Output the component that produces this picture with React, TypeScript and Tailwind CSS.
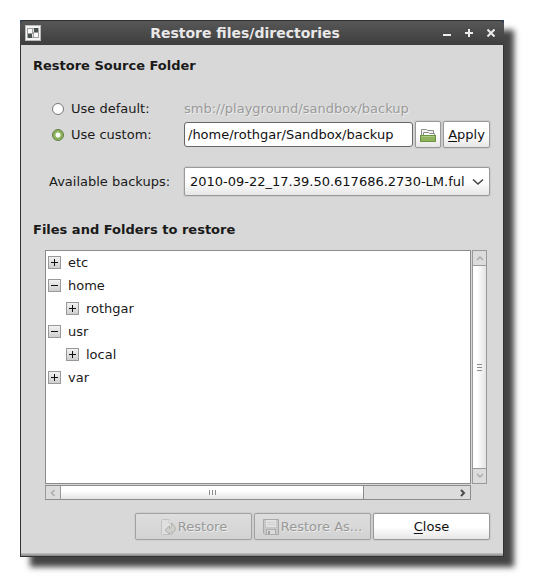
import { useState } from "react";
import type { ReactNode } from "react";

const RAISED =
  "rounded-[2px] border border-[#999] bg-linear-to-b from-white from-50% to-[#e6e6e6] text-[#111] shadow-[0_0_0_1px_#cbcbcb]";
const DISABLED =
  "rounded-[2px] border border-[#a2a2a2] bg-linear-to-b from-[#dedede] to-[#d2d2d2] text-[#999] shadow-[0_0_0_1px_#cecece] [text-shadow:1px_1px_0_#ececec]";

function AppIcon() {
  return (
    <svg width="16" height="16" viewBox="0 0 16 16" shapeRendering="crispEdges">
      <rect width="16" height="16" fill="#b9b9b9" />
      <rect x="1" y="1" width="14" height="14" fill="#f4f4f4" />
      <rect x="2" y="3" width="12" height="10" fill="#a4a4a4" />
      <rect x="3" y="4" width="10" height="8" fill="#e4e4e4" />
      <rect x="9" y="3" width="4" height="4" fill="#4a4f4f" />
      <rect x="3" y="9" width="4" height="4" fill="#4a4f4f" />
      <rect x="2" y="3" width="6" height="6" fill="#a0a0a0" />
      <rect x="3" y="4" width="4" height="4" fill="#f8f8f8" />
      <rect x="8" y="7" width="6" height="6" fill="#a0a0a0" />
      <rect x="9" y="8" width="4" height="4" fill="#f8f8f8" />
    </svg>
  );
}

function FolderIcon() {
  return (
    <svg width="16" height="16" viewBox="0 0 16 16">
      <path d="M1.5 8V2.5H6.5L7.5 3.5H13.5V8" fill="#f4f4f4" stroke="#8c8c8c" />
      <path d="M3.5 8V5.5H8.5L9.5 6.5H14.5V8" fill="#fff" stroke="#8c8c8c" />
      <rect x="0.5" y="8.5" width="15" height="6" fill="#8fb35f" stroke="#6b9440" />
      <path d="M1.5 9.5H14.5" stroke="#abc985" />
    </svg>
  );
}

function RestoreIcon() {
  return (
    <svg width="16" height="16" viewBox="0 0 16 16">
      <path d="M1.5 1.5Q1.5 0.5 2.5 0.5H9L12.5 4V15.5H2.5Q1.5 15.5 1.5 14.5Z" fill="#dfdfdf" stroke="#c2c2c2" />
      <path d="M9 0.5V4H12.5" fill="#e8e8e8" stroke="#c8c8c8" />
      <path
        d="M11 4.5Q15.5 6 15.3 10Q14.5 14.2 9.5 14V15.3L5 11L9.5 7V9.5Q12.5 8.5 11 4.5Z"
        fill="#cfcfcb"
        stroke="#b0b0ac"
      />
    </svg>
  );
}

function SaveIcon() {
  return (
    <svg width="16" height="16" viewBox="0 0 16 16">
      <path d="M0.5 0.5H15.5V15.5H2L0.5 14Z" fill="#c8c8c8" stroke="#a9a9a9" />
      <rect x="3" y="1" width="10" height="7" fill="#e2e2e2" />
      <path d="M4 3.5H12M4 5.5H12" stroke="#cfcfcf" />
      <rect x="3.5" y="10.5" width="9" height="5" fill="#dcdcdc" stroke="#adadad" />
      <rect x="5" y="12" width="2" height="3" fill="#a0a0a0" />
    </svg>
  );
}

function ScrollButton({ label, path }: { label: string; path: string }) {
  return (
    <button
      type="button"
      aria-label={label}
      className="flex size-4 shrink-0 items-center justify-center border border-[#999] bg-[#dcdcdc]"
    >
      <svg width="8" height="8" viewBox="0 0 8 8" fill="none" stroke="#ababab" strokeWidth="1.5" className="shrink-0">
        <path d={path} />
      </svg>
    </button>
  );
}

function WindowButton({ label, path }: { label: string; path: string }) {
  return (
    <button type="button" aria-label={label} className="flex size-4 items-center justify-center">
      <svg width="8" height="8" viewBox="0 0 8 8" stroke="#ececec" strokeWidth="2">
        <path d={path} />
      </svg>
    </button>
  );
}

type Node = { name: string; open?: boolean; children?: Node[] };

const TREE: Node[] = [
  { name: "etc" },
  { name: "home", open: true, children: [{ name: "rothgar" }] },
  { name: "usr", open: true, children: [{ name: "local" }] },
  { name: "var" },
];

function TreeItem({ node }: { node: Node }) {
  const [open, setOpen] = useState(Boolean(node.open));
  return (
    <li>
      <div className="flex h-[23px] items-center gap-[7px]">
        <button
          type="button"
          aria-label={(open ? "Collapse " : "Expand ") + node.name}
          onClick={() => setOpen(!open)}
          className="size-[13px] shrink-0 border border-[#999] bg-linear-to-b from-[#f2f2f2] to-[#cfcfcf]"
        >
          <svg width="11" height="11" viewBox="0 0 11 11" stroke="#111">
            <path d={open ? "M2 5.5H9" : "M2 5.5H9M5.5 2V9"} />
          </svg>
        </button>
        <span>{node.name}</span>
      </div>
      {open && node.children && (
        <ul className="pl-[18px]">
          {node.children.map((c) => (
            <TreeItem key={c.name} node={c} />
          ))}
        </ul>
      )}
    </li>
  );
}

function Radio({ checked, onChange, children }: { checked: boolean; onChange: () => void; children: ReactNode }) {
  return (
    <label className="flex w-[132px] shrink-0 items-center gap-[7px]">
      <input
        type="radio"
        name="source"
        checked={checked}
        onChange={onChange}
        className="size-3 shrink-0 appearance-none rounded-full border border-[#777] bg-white checked:border-[#5d7a41] checked:bg-[radial-gradient(circle,#fff_2px,#8db35c_3px)]"
      />
      {children}
    </label>
  );
}

export default function App() {
  const [source, setSource] = useState("custom");
  const [path, setPath] = useState("/home/rothgar/Sandbox/backup");

  return (
    <div className="min-h-screen bg-white pt-5 pr-[30px] pb-[31px] pl-5 font-['DejaVu_Sans','Noto_Sans',sans-serif] text-[13px] leading-4 text-[#1a1a1a]">
      <main className="border-b border-[#333] bg-[#d8d8d8] shadow-[10px_10px_6px_#444]">
        <header className="bg-[#2c4a80]">
          <div className="flex h-[25px] items-center rounded-t-[4px] border-t border-[#2c2f30] bg-linear-to-b from-[#575757] to-[#3e3e3e] px-[5px] text-[#e8e8e8]">
            <div className="w-[30px]">
              <AppIcon />
            </div>
            <h1 className="flex-1 text-center text-[14px] font-bold">Restore files/directories</h1>
            <div className="flex w-16 justify-end gap-[6px]">
              <WindowButton label="Minimize" path="M0 6H8" />
              <WindowButton label="Maximize" path="M0 4H8M4 0V8" />
              <WindowButton label="Close window" path="M0.5 0.5L7.5 7.5M7.5 0.5L0.5 7.5" />
            </div>
          </div>
        </header>

        <div className="border-x border-[#333] pt-[13px] pr-[13px] pb-[13px] pl-3">
          <h2 className="font-bold">Restore Source Folder</h2>

          <div className="mt-[27px] flex items-center pl-[19px]">
            <Radio checked={source === "default"} onChange={() => setSource("default")}>
              Use default:
            </Radio>
            <span className="text-[#9a9a9a] [text-shadow:1px_1px_0_#ececec]">smb://playground/sandbox/backup</span>
          </div>

          <div className="mt-1 flex items-center pl-[19px]">
            <Radio checked={source === "custom"} onChange={() => setSource("custom")}>
              Use custom:
            </Radio>
            <input
              aria-label="Custom folder"
              value={path}
              onChange={(e) => setPath(e.target.value)}
              className="h-[25px] min-w-0 flex-1 rounded-[3px] border border-[#666] bg-white px-[3px] text-[#111] outline-none"
            />
            <button
              type="button"
              aria-label="Browse"
              className={"ml-[2px] flex h-[27px] w-[26px] items-center justify-center " + RAISED}
            >
              <FolderIcon />
            </button>
            <button type="button" className={"ml-[2px] h-[27px] w-[47px] " + RAISED}>
              <u className="underline-offset-2">A</u>pply
            </button>
          </div>

          <div className="mt-[19px] flex items-center pl-4">
            <label htmlFor="backups" className="w-[135px] shrink-0">
              Available backups:
            </label>
            <div className="grid min-w-0 flex-1 items-center">
              <select
                id="backups"
                className={"col-start-1 row-start-1 h-[29px] w-full min-w-0 appearance-none pl-[5px] outline-none " + RAISED}
              >
                <option>2010-09-22_17.39.50.617686.2730-LM.ful</option>
              </select>
              <svg
                width="12"
                height="8"
                viewBox="0 0 12 8"
                fill="none"
                stroke="#444"
                strokeWidth="1.6"
                className="pointer-events-none col-start-1 row-start-1 mr-[6px] justify-self-end"
              >
                <path d="M1 1.5L6 6L11 1.5" />
              </svg>
            </div>
          </div>

          <h2 className="mt-[26px] font-bold">Files and Folders to restore</h2>

          <div className="mt-3 grid grid-cols-[1fr_15px] gap-px pr-[3px] pl-3">
            <ul className="h-[234px] overflow-hidden border border-[#8c8c8c] bg-white pl-[2px]">
              {TREE.map((n) => (
                <TreeItem key={n.name} node={n} />
              ))}
            </ul>
            <div className="flex w-[15px] flex-col overflow-hidden border-r border-[#999]">
              <ScrollButton label="Scroll up" path="M1 6L4 3L7 6" />
              <div className="flex flex-1 flex-col items-center justify-center gap-[2px] border-l border-[#999] bg-linear-to-r from-white from-30% to-[#e4e4e4]">
                <i className="h-px w-[5px] bg-[#8c8c8c]" />
                <i className="h-px w-[5px] bg-[#8c8c8c]" />
                <i className="h-px w-[5px] bg-[#8c8c8c]" />
              </div>
              <ScrollButton label="Scroll down" path="M1 2L4 5L7 2" />
            </div>
            <div className="flex h-[15px] overflow-hidden border-y border-[#8c8c8c] bg-[#dcdcdc]">
              <div className="-my-px flex">
                <ScrollButton label="Scroll left" path="M5.5 1L2.5 4L5.5 7" />
              </div>
              <div className="flex flex-1 items-center">
                <div className="flex h-full w-10/13 items-center justify-center gap-[2px] border-r border-[#8c8c8c] bg-linear-to-b from-white from-40% to-[#e4e4e4]">
                  <i className="h-[5px] w-px bg-[#8c8c8c]" />
                  <i className="h-[5px] w-px bg-[#8c8c8c]" />
                  <i className="h-[5px] w-px bg-[#8c8c8c]" />
                </div>
              </div>
              <button
                type="button"
                aria-label="Scroll right"
                className="flex w-4 items-center justify-center border-r border-[#8c8c8c]"
              >
                <svg width="8" height="8" viewBox="0 0 8 8" fill="none" stroke="#4a4a4a" strokeWidth="2">
                  <path d="M2 1L5 4L2 7" />
                </svg>
              </button>
            </div>
          </div>

          <div className="mt-[13px] flex justify-end gap-[2px]">
            <button type="button" disabled className={"flex h-[27px] w-[117px] items-center justify-center gap-[2px] " + DISABLED}>
              <RestoreIcon />
              Restore
            </button>
            <button type="button" disabled className={"flex h-[27px] w-[117px] items-center justify-center gap-[2px] " + DISABLED}>
              <SaveIcon />
              Restore As...
            </button>
            <button type="button" className={"h-[27px] w-[117px] " + RAISED}>
              <u className="underline-offset-2">C</u>lose
            </button>
          </div>
        </div>
        <div className="h-[3px] border-x border-[#333] bg-linear-to-b from-[#c4c4c4] to-[#858585]" />
      </main>
    </div>
  );
}
